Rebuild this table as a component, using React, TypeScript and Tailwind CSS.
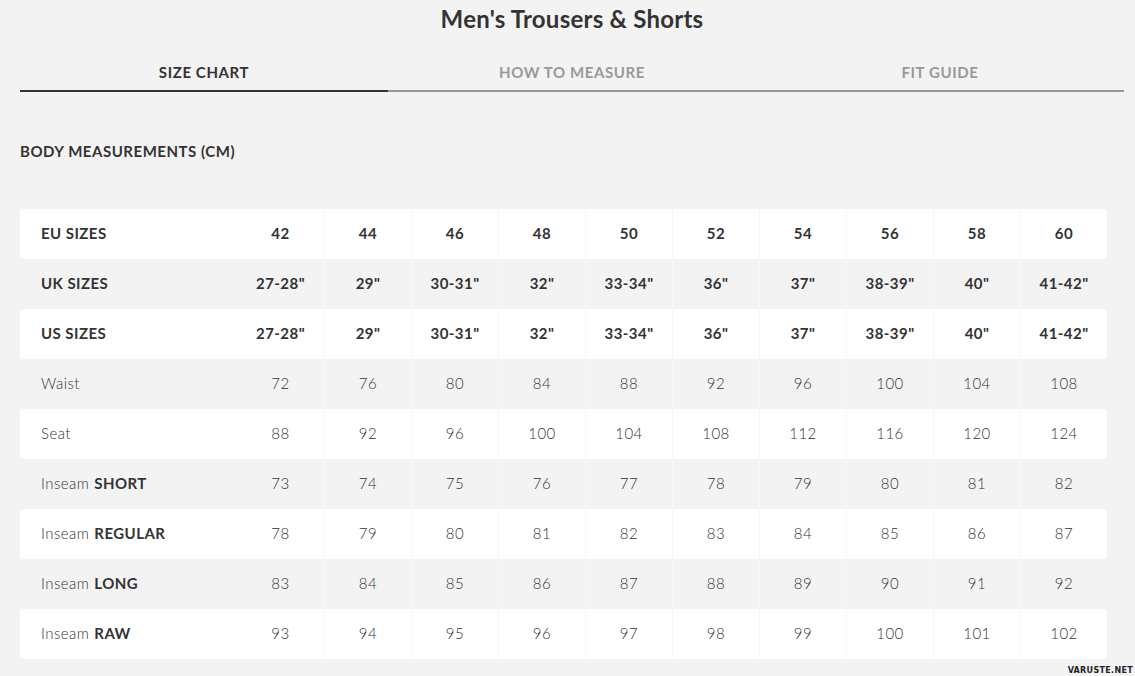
import React from 'react';

const sizes = ['42', '44', '46', '48', '50', '52', '54', '56', '58', '60'];
const inch = ['27-28"', '29"', '30-31"', '32"', '33-34"', '36"', '37"', '38-39"', '40"', '41-42"'];

interface Row {
  label: string;
  bold?: string;
  head?: boolean;
  values: string[];
}

const rows: Row[] = [
  { label: 'EU SIZES', head: true, values: sizes },
  { label: 'UK SIZES', head: true, values: inch },
  { label: 'US SIZES', head: true, values: inch },
  { label: 'Waist', values: ['72', '76', '80', '84', '88', '92', '96', '100', '104', '108'] },
  { label: 'Seat', values: ['88', '92', '96', '100', '104', '108', '112', '116', '120', '124'] },
  { label: 'Inseam', bold: 'SHORT', values: ['73', '74', '75', '76', '77', '78', '79', '80', '81', '82'] },
  { label: 'Inseam', bold: 'REGULAR', values: ['78', '79', '80', '81', '82', '83', '84', '85', '86', '87'] },
  { label: 'Inseam', bold: 'LONG', values: ['83', '84', '85', '86', '87', '88', '89', '90', '91', '92'] },
  { label: 'Inseam', bold: 'RAW', values: ['93', '94', '95', '96', '97', '98', '99', '100', '101', '102'] },
];

const tabs = ['SIZE CHART', 'HOW TO MEASURE', 'FIT GUIDE'];

export default function App() {
  return (
    <div className="relative min-h-[676px] w-[1135px] bg-[#f3f3f3] text-[#333] font-['Lato','Liberation_Sans',sans-serif]">
      <div className="pl-[20px] pr-[11px]">
        <h1 className="pt-[4px] h-[38px] text-center text-[24px] leading-[30px] font-bold tracking-[0.01em] text-[#333]">
          Men's Trousers &amp; Shorts
        </h1>

        <div className="mt-[24px] flex">
          {tabs.map((t, i) => (
            <div
              key={t}
              className={`flex-1 pb-[8px] text-center text-[15px] leading-[20px] font-bold tracking-[0.04em] border-b-2 ${
                i === 0 ? 'border-[#333] text-[#333]' : 'border-[#999] text-[#999]'
              }`}
            >
              {t}
            </div>
          ))}
        </div>

        <h2 className="mt-[49px] text-[15px] leading-[20px] font-bold tracking-[0.035em] text-[#333]">
          BODY MEASUREMENTS (CM)
        </h2>

        <div className="mt-[48px] w-[1087px]">
          {rows.map((r, ri) => (
            <div
              key={ri}
              className={`grid grid-cols-[217px_repeat(10,87px)] h-[50px] rounded-[4px] ${
                ri % 2 === 0 ? 'bg-white' : 'bg-transparent'
              }`}
            >
              <div
                className={`flex items-center pl-[21px] pb-[2px] text-[15px] tracking-[0.03em] ${
                  r.head ? 'font-bold text-[#333]' : 'font-light text-[#333]'
                }`}
              >
                {r.label}
                {r.bold && <span className="ml-[5px] font-bold text-[#333]">{r.bold}</span>}
              </div>
              {r.values.map((v, vi) => (
                <div
                  key={vi}
                  className={`flex items-center justify-center pb-[2px] text-[15px] tracking-[0.03em] ${
                    vi > 0 ? 'border-l border-[#f7f7f7]' : ''
                  } ${r.head ? 'font-bold text-[#333]' : 'font-light text-[#333]'}`}
                >
                  {v}
                </div>
              ))}
            </div>
          ))}
        </div>
      </div>

      <div className="absolute right-[2px] bottom-[0px] text-[8px] leading-[10px] font-bold tracking-[0.04em] text-[#222] font-['DejaVu_Sans',sans-serif]">
        VARUSTE.NET
      </div>
    </div>
  );
}
